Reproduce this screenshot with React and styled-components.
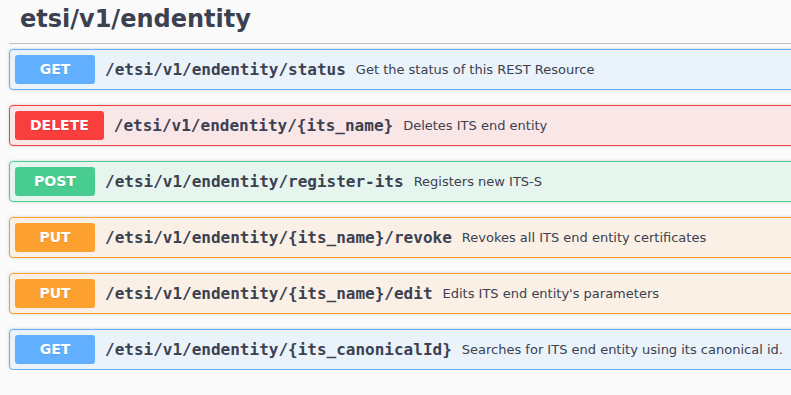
import React from 'react';
import styled, { createGlobalStyle } from 'styled-components';

const GlobalStyle = createGlobalStyle`
  html, body {
    margin: 0;
    padding: 0;
    background: #fafafa;
    overflow: hidden;
  }
  body {
    font-family: "DejaVu Sans", sans-serif;
    color: #3b4151;
  }
`;

const METHODS = {
  get: { color: '#61affe', bg: 'rgba(97, 175, 254, 0.1)' },
  delete: { color: '#f93e3e', bg: 'rgba(249, 62, 62, 0.1)' },
  post: { color: '#49cc90', bg: 'rgba(73, 204, 144, 0.1)' },
  put: { color: '#fca130', bg: 'rgba(252, 161, 48, 0.1)' },
};

const Endpoints = [
  { method: 'get', path: '/etsi/v1/endentity/status', summary: 'Get the status of this REST Resource' },
  { method: 'delete', path: '/etsi/v1/endentity/{its_name}', summary: 'Deletes ITS end entity' },
  { method: 'post', path: '/etsi/v1/endentity/register-its', summary: 'Registers new ITS-S' },
  { method: 'put', path: '/etsi/v1/endentity/{its_name}/revoke', summary: 'Revokes all ITS end entity certificates' },
  { method: 'put', path: '/etsi/v1/endentity/{its_name}/edit', summary: "Edits ITS end entity's parameters" },
  { method: 'get', path: '/etsi/v1/endentity/{its_canonicalId}', summary: 'Searches for ITS end entity using its canonical id.' },
];

// the section is wider than the window, the right edges are cut off
const Section = styled.div`
  width: 830px;
  padding: 0 0 0 9px;
`;

const TagHeader = styled.h3`
  margin: 0 0 5px;
  padding: 5px 20px 10px 11px;
  font-size: 24px;
  font-weight: 700;
  line-height: 28px;
  color: #3b4151;
  border-bottom: 1px solid rgba(59, 65, 81, 0.3);
`;

const OpList = styled.div`
  display: flex;
  flex-direction: column;
  gap: 15px;
`;

const OpBlock = styled.div`
  background: ${p => METHODS[p.$method].bg};
  border: 1px solid ${p => METHODS[p.$method].color};
  border-radius: 4px;
  box-shadow: 0 0 3px rgba(0, 0, 0, 0.19);
`;

const Summary = styled.div`
  display: flex;
  align-items: center;
  padding: 5px;
  height: 29px;
`;

const MethodBadge = styled.span`
  min-width: 80px;
  box-sizing: border-box;
  padding: 6px 15px;
  font-size: 14px;
  line-height: 17px;
  font-weight: 700;
  text-align: center;
  color: #fff;
  background: ${p => METHODS[p.$method].color};
  border-radius: 3px;
  text-shadow: 0 1px 0 rgba(0, 0, 0, 0.1);
`;

const Path = styled.span`
  padding: 0 10px;
  font-family: "DejaVu Sans Mono", monospace;
  font-size: 16px;
  font-weight: 700;
  color: #3b4151;
  white-space: nowrap;
`;

const Description = styled.span`
  font-size: 13px;
  color: #3b4151;
  white-space: nowrap;
`;

const App = () => {
  return (
    <>
      <GlobalStyle />
      <Section>
        <TagHeader>etsi/v1/endentity</TagHeader>
        <OpList>
          {Endpoints.map((op, index) => (
            <OpBlock $method={op.method} key={index}>
              <Summary>
                <MethodBadge $method={op.method}>{op.method.toUpperCase()}</MethodBadge>
                <Path>{op.path}</Path>
                <Description>{op.summary}</Description>
              </Summary>
            </OpBlock>
          ))}
        </OpList>
      </Section>
    </>
  );
};

export default App;
